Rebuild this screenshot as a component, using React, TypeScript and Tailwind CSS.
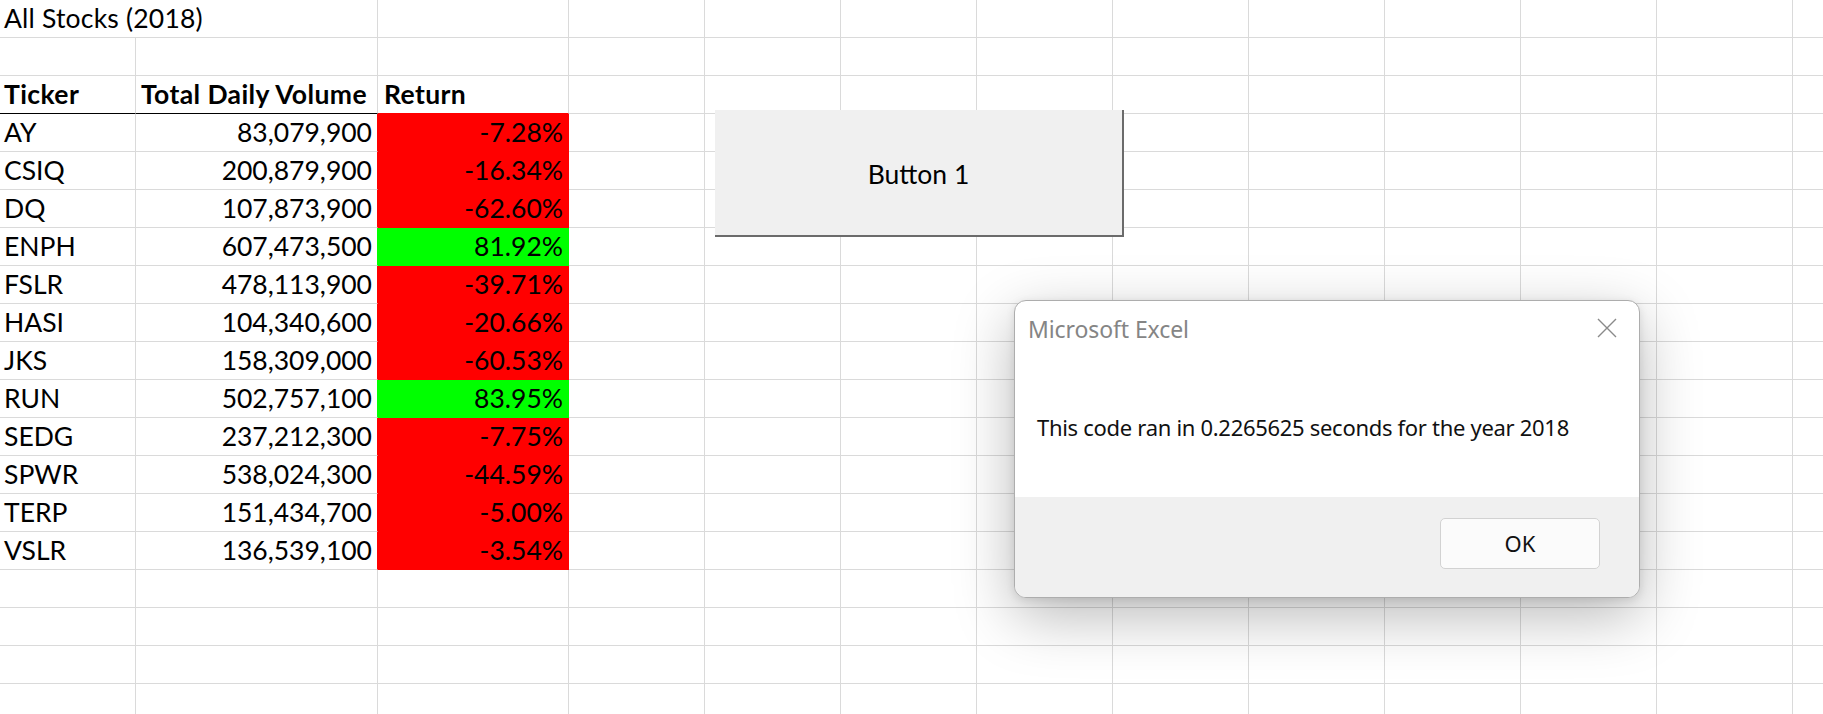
import React from "react";

const data: [string, string, string, "r" | "g"][] = [
  ["AY", "83,079,900", "-7.28%", "r"],
  ["CSIQ", "200,879,900", "-16.34%", "r"],
  ["DQ", "107,873,900", "-62.60%", "r"],
  ["ENPH", "607,473,500", "81.92%", "g"],
  ["FSLR", "478,113,900", "-39.71%", "r"],
  ["HASI", "104,340,600", "-20.66%", "r"],
  ["JKS", "158,309,000", "-60.53%", "r"],
  ["RUN", "502,757,100", "83.95%", "g"],
  ["SEDG", "237,212,300", "-7.75%", "r"],
  ["SPWR", "538,024,300", "-44.59%", "r"],
  ["TERP", "151,434,700", "-5.00%", "r"],
  ["VSLR", "136,539,100", "-3.54%", "r"],
];

const grid = "border-r border-b border-r-[#dadada] border-b-[#dadada]";

function Trail() {
  return (
    <>
      {Array.from({ length: 10 }).map((_, i) => (
        <div key={i} className={`w-[136px] shrink-0 h-full ${grid}`} />
      ))}
    </>
  );
}

function Row({ children }: { children: React.ReactNode }) {
  return <div className="flex h-[38px] shrink-0">{children}</div>;
}

function EmptyRow() {
  return (
    <Row>
      <div className={`w-[136px] shrink-0 h-full ${grid}`} />
      <div className={`w-[242px] shrink-0 h-full ${grid}`} />
      <div className={`w-[191px] shrink-0 h-full ${grid}`} />
      <Trail />
    </Row>
  );
}

export default function App() {
  return (
    <div className="relative w-[1823px] h-[714px] overflow-hidden bg-white font-['Lato',sans-serif] text-[26.5px] leading-none text-black">
      <div className="flex flex-col">
        {/* Title row */}
        <Row>
          <div className="w-[136px] shrink-0 h-full flex items-center pl-[4px] whitespace-nowrap tracking-[0.2px] border-b border-b-[#dadada]">
            All Stocks (2018)
          </div>
          <div className={`w-[242px] shrink-0 h-full ${grid}`} />
          <div className={`w-[191px] shrink-0 h-full ${grid}`} />
          <Trail />
        </Row>
        <EmptyRow />
        {/* Header row */}
        <Row>
          <div className="w-[136px] shrink-0 h-full flex items-center pl-[4px] font-bold tracking-[0.4px] border-r border-b border-r-[#dadada] border-b-black">
            Ticker
          </div>
          <div className="w-[242px] shrink-0 h-full flex items-center pl-[5px] font-bold tracking-[0.4px] whitespace-nowrap border-r border-b border-r-[#dadada] border-b-black">
            Total Daily Volume
          </div>
          <div className="w-[191px] shrink-0 h-full flex items-center pl-[6px] font-bold tracking-[0.4px] border-r border-b border-r-[#dadada] border-b-[#ff0000]">
            Return
          </div>
          <Trail />
        </Row>
        {data.map(([t, v, r, c]) => (
          <Row key={t}>
            <div className={`w-[136px] shrink-0 h-full flex items-center pl-[4px] ${grid}`}>{t}</div>
            <div
              className={`w-[242px] shrink-0 h-full flex items-center justify-end pr-[5px] border-r border-b border-b-[#dadada] ${
                c === "r" ? "border-r-[#ff0000]" : "border-r-[#00ff00]"
              }`}
            >
              {v}
            </div>
            <div
              className={`w-[191px] shrink-0 h-full flex items-center justify-end pr-[5px] border-r border-b ${
                c === "r"
                  ? "bg-[#ff0000] border-r-[#ff0000] border-b-[#ff0000]"
                  : "bg-[#00ff00] border-r-[#00ff00] border-b-[#00ff00]"
              }`}
            >
              {r}
            </div>
            <Trail />
          </Row>
        ))}
        <EmptyRow />
        <EmptyRow />
        <EmptyRow />
        <EmptyRow />
      </div>

      {/* Form button on sheet */}
      <div className="absolute left-[715px] top-[110px] w-[409px] h-[127px] bg-[#f0f0f0] border-r-2 border-b-2 border-r-[#6b6b6b] border-b-[#6b6b6b] flex items-center justify-center pt-[3px]">
        <span>Button 1</span>
      </div>

      {/* Message box */}
      <div className="absolute left-[1014px] top-[300px] w-[626px] h-[298px] rounded-[12px] border-[1.5px] border-[#adadad] bg-white overflow-hidden flex flex-col shadow-[0_18px_60px_rgba(0,0,0,0.28),0_2px_8px_rgba(0,0,0,0.10)] font-['Noto_Sans',sans-serif] text-[22px] leading-none">
        <div className="h-[57px] shrink-0 flex items-center justify-between pl-[13px] pr-[22px]">
          <span className="text-[#858585] text-[23px] tracking-[-0.1px]">Microsoft Excel</span>
          <svg width="20" height="20" viewBox="0 0 20 20" className="mt-[-3px]">
            <path d="M1 1 L19 19 M19 1 L1 19" stroke="#8a8a8a" strokeWidth="1.4" fill="none" />
          </svg>
        </div>
        <div className="flex-1 flex items-center pl-[22px]">
          <span className="text-[#111] tracking-[-0.3px] whitespace-nowrap">
            This code ran in 0.2265625 seconds for the year 2018
          </span>
        </div>
        <div className="h-[100.5px] shrink-0 bg-[#f0f0f0] flex items-start justify-end pt-[21px] pr-[39px]">
          <div className="w-[160px] h-[51px] rounded-[5px] border border-[#d2d2d2] bg-[#fbfbfb] flex items-center justify-center text-[#111]">
            OK
          </div>
        </div>
      </div>
    </div>
  );
}
